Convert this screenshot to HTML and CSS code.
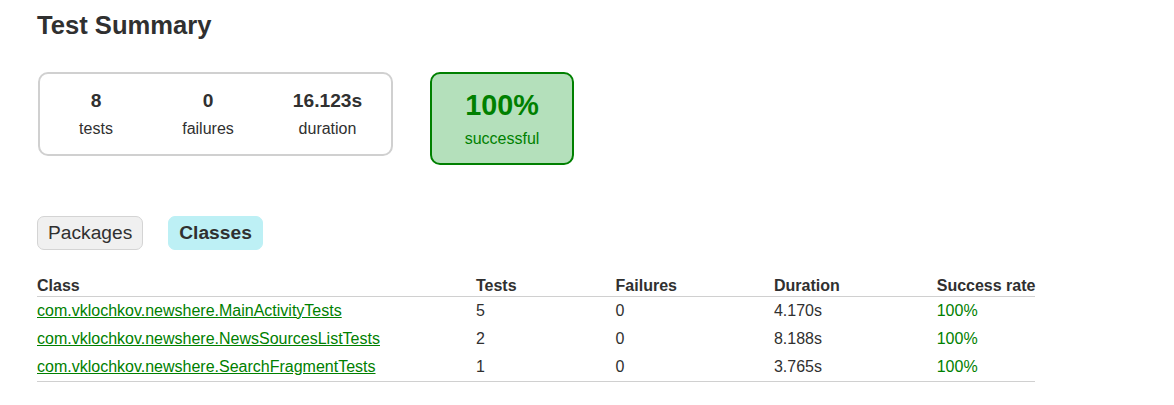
FILE: index.html
```
<!DOCTYPE html>
<html>
<head>
<meta charset="utf-8">
<title>Test Summary</title>
<link rel="stylesheet" href="styles.css">
</head>
<body>
<div class="content">
<h1 class="title">Test Summary</h1>
<div class="summary">
<div class="summary-cell">
<div class="summary-group">
<div class="info-box"><div class="counter">8</div><p class="label">tests</p></div>
<div class="info-box"><div class="counter">0</div><p class="label">failures</p></div>
<div class="info-box info-box-wide"><div class="counter">16.123s</div><p class="label">duration</p></div>
</div>
</div>
<div class="summary-cell">
<div class="info-box success-rate"><div class="percent">100%</div><p class="label">successful</p></div>
</div>
</div>
<ul class="tab-links">
<li class="tab-link"><a class="tab-anchor" href="#">Packages</a></li>
<li class="tab-link tab-selected"><a class="tab-anchor" href="#"><span class="tab-title">Classes</span></a></li>
</ul>
<div class="tab">
<table class="results">
<thead>
<tr><th class="hcell">Class</th><th class="hcell col-tests">Tests</th><th class="hcell col-failures">Failures</th><th class="hcell col-duration">Duration</th><th class="hcell">Success rate</th></tr>
</thead>
<tbody>
<tr><td class="cell"><a class="class-link" href="#">com.vklochkov.newshere.MainActivityTests</a></td><td class="cell">5</td><td class="cell">0</td><td class="cell">4.170s</td><td class="cell ok">100%</td></tr>
<tr><td class="cell"><a class="class-link" href="#">com.vklochkov.newshere.NewsSourcesListTests</a></td><td class="cell">2</td><td class="cell">0</td><td class="cell">8.188s</td><td class="cell ok">100%</td></tr>
<tr><td class="cell"><a class="class-link" href="#">com.vklochkov.newshere.SearchFragmentTests</a></td><td class="cell">1</td><td class="cell">0</td><td class="cell">3.765s</td><td class="cell ok">100%</td></tr>
</tbody>
</table>
</div>
</div>
</body>
</html>
```
FILE: styles.css
```
html, body {
  margin: 0;
  padding: 0;
  background: #ffffff;
}
body {
  font-family: "Liberation Sans", Arial, sans-serif;
  font-size: 16px;
  color: #303030;
}
.content {
  padding: 11px 37px 20px 37px;
}
.title {
  font-size: 25.6px;
  font-weight: bold;
  margin: 0 0 10px 0;
  line-height: 29px;
  white-space: nowrap;
}
.summary {
  display: flex;
  align-items: flex-start;
  margin-top: 31px;
  margin-bottom: 40px;
}
.summary-cell {
  padding: 1px;
}
.summary-group {
  display: flex;
  border: solid 2px #d0d0d0;
  border-radius: 10px;
}
.info-box {
  width: 110px;
  padding: 15px 0;
  margin: 1px;
  text-align: center;
}
.info-box-wide {
  width: 125px;
}
.label {
  margin: 0;
  line-height: 18px;
}
.counter {
  font-size: 19.2px;
  line-height: 22px;
  font-weight: bold;
  margin-bottom: 8px;
}
.success-rate {
  width: 140px;
  margin: 0 0 0 35px;
  border: solid 2px #008000;
  border-radius: 10px;
  background-color: #b4e0bb;
  color: #008000;
}
.percent {
  font-size: 28.8px;
  line-height: 33px;
  font-weight: bold;
  margin-bottom: 8px;
}
.tab-links {
  display: flex;
  margin: 0;
  padding: 10px 0;
  list-style: none;
}
.tab-link {
  padding: 5px 10px;
  margin-right: 25px;
  border: solid 1px #d4d4d4;
  border-radius: 7px;
  background-color: #f0f0f0;
}
.tab-selected {
  background-color: #bdf0f5;
  border-color: #bdf0f5;
}
.tab-anchor {
  display: block;
  font-size: 19.2px;
  line-height: 22px;
  color: #303030;
  text-decoration: none;
}
.tab-title {
  font-weight: bold;
}
.tab {
  margin-top: 17px;
}
.results {
  border-collapse: collapse;
  border-bottom: solid 1px #d0d0d0;
}
.hcell {
  text-align: left;
  white-space: nowrap;
  padding: 0 0 1px 96px;
  line-height: 18px;
  border-bottom: solid 1px #d0d0d0;
}
.hcell:first-child {
  padding-left: 0;
}
.col-tests {
  padding-right: 3px;
}
.col-failures {
  padding-right: 1px;
}
.col-duration {
  padding-right: 1px;
}
.cell {
  white-space: nowrap;
  padding: 5px 0 5px 96px;
  line-height: 18px;
}
.cell:first-child {
  padding-left: 0;
}
.class-link {
  color: #008000;
}
.ok {
  color: #008000;
}
```
